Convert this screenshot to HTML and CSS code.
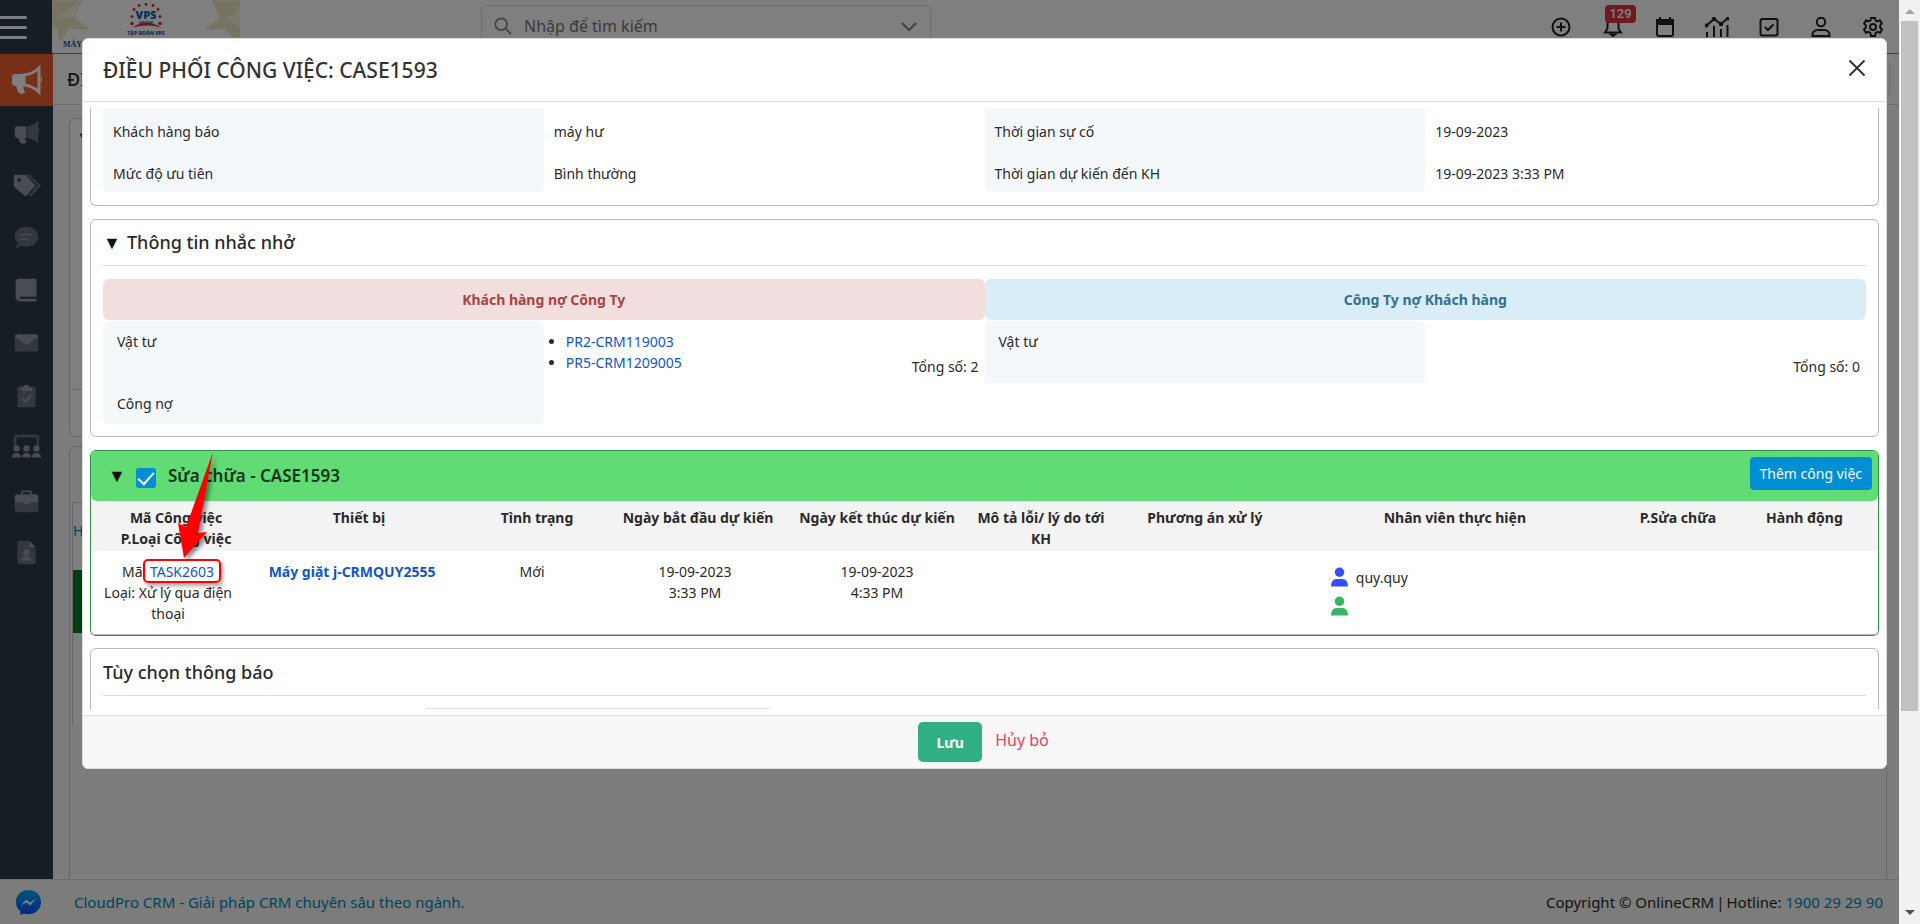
FILE: index.html
```html
<!DOCTYPE html>
<html lang="vi">
<head>
<meta charset="utf-8">
<title>Điều phối công việc</title>
<link rel="stylesheet" href="styles.css">
</head>
<body>
<div class="app">
  <header class="topbar">
    <button class="menu-btn" aria-label="Menu"><span></span><span></span><span></span></button>
    <svg class="logo" viewBox="0 0 188 51" aria-label="VPS Group">
      <g fill="#efe6c4">
        <path d="M0 0h30l-8 17 16 12-21-1-9 14L5 27H0z"/>
        <path d="M188 0h-28l8 17-16 12 21-1 8 9 3 0 4-1z"/>
      </g>
      <path d="M6 17l16 0 6-17-11 8zM172 17l10-3 6-10v22z" fill="#f8f3dd"/>
      <path d="M81 27q13-10 28 0q-14-4-28 0z" fill="#d6303f"/>
      <g fill="#d6303f"><circle cx="80" cy="16" r="1.500"/><circle cx="82" cy="9" r="1.400"/><circle cx="87" cy="5" r="1.400"/><circle cx="94" cy="4" r="1.400"/><circle cx="101" cy="5" r="1.400"/><circle cx="106" cy="9" r="1.400"/><circle cx="108" cy="16" r="1.500"/><circle cx="80" cy="23" r="1.800"/><circle cx="108" cy="23" r="1.800"/></g>
      <text x="94" y="18" text-anchor="middle" class="logo-vps">VPS</text>
      <text x="94" y="23" text-anchor="middle" class="logo-group">GROUP</text>
      <text x="94" y="34" text-anchor="middle" class="logo-sub">TẬP ĐOÀN VPS</text>
      <text x="11" y="46" class="logo-name">MÁY</text>
    </svg>
    <div class="search-wrap">
      <label class="search">
        <svg viewBox="0 0 20 20" class="i18"><circle cx="8" cy="8" r="6.500"/><path d="M13 13l6 6"/></svg>
        <input type="text" placeholder="Nhập để tìm kiếm" aria-label="Nhập để tìm kiếm">
        <svg viewBox="0 0 18 18" class="i18"><path d="M2 6l7 7 7-7"/></svg>
      </label>
    </div>
    <div class="tools">
      <button aria-label="Thêm"><svg viewBox="0 0 20 20"><circle cx="10" cy="10" r="8.500"/><path d="M10 5.500v9M5.500 10h9"/></svg></button>
      <button aria-label="Thông báo"><svg viewBox="0 0 20 20"><path d="M2 15.500h16l-2.500-4V7a5.500 5.500 0 0 0-11 0v4.500z"/><path d="M8 17.500h4l-2 1.500z" fill="#222"/></svg><span class="badge">129</span></button>
      <button aria-label="Lịch"><svg viewBox="0 0 20 20"><rect x="2" y="3" width="16" height="16" rx="2"/><path d="M2 3h16v4H2zM5 0v3M15 0v3" fill="#222"/></svg></button>
      <button aria-label="Báo cáo"><svg viewBox="0 0 24 20" class="wide"><path d="M2 20v-5M9 20V9M16 20v-8M22.500 20V8M1 9l8-7 7 5 7-6"/><g fill="#222"><circle cx="1.500" cy="8.500" r="1"/><circle cx="9" cy="2" r="1.200"/><circle cx="16" cy="7" r="1.200"/><circle cx="23" cy="1.500" r="1"/></g></svg></button>
      <button aria-label="Việc cần làm"><svg viewBox="0 0 20 20"><rect x="1.500" y="2" width="17" height="16.500" rx="2"/><path d="M6 10l3 3 5.500-5.500"/></svg></button>
      <button aria-label="Tài khoản"><svg viewBox="0 0 20 20"><circle cx="10" cy="5" r="4.200"/><path d="M1.500 19v-1.500a5 5 0 0 1 5-4.500h7a5 5 0 0 1 5 4.500V19z"/></svg></button>
      <button aria-label="Cài đặt"><svg viewBox="0 0 20 20"><path d="M8 1h4l.6 2.600 1.700.9 2.500-1.200 2 3-1.600 2v2.200l1.800 2-1.800 3.200-2.700-.8-1.800 1L12 19H8l-.7-3.100-1.800-1-2.700.8L1 12.500l1.800-2V8.300L1.200 6.300l2-3 2.500 1.200 1.700-.9z"/><circle cx="10" cy="10" r="3"/></svg></button>
    </div>
  </header>
  <div class="middle">
    <nav class="side">
      <a href="#" class="active" aria-label="Tiếp thị"><svg viewBox="0 0 32 32"><path d="M4 10h9v12h-1l2 7q-5 2-7-1l-2-6q-4 0-4-3v-6q0-3 3-3z"/><path d="M13 11q9-1 15-7v24q-6-6-15-7z" fill="none" stroke="currentColor" stroke-width="3"/><path d="M30 12q2 4 0 7z"/></svg></a>
      <a href="#" aria-label="Chiến dịch"><svg viewBox="0 0 32 32"><path d="M6 9h10v13h-2l2 5q-4 3-7 0l-2-5H6q-3 0-3-3v-7q0-3 3-3z"/><path class="dim" d="M17 9q7-1 12-6v8q3 3 0 6v11q-5-5-12-6z"/></svg></a>
      <a href="#" aria-label="Nhãn"><svg viewBox="0 0 32 32"><path class="dim" d="M18 3l14 13-11 12-3-1 10-11L16 4z"/><path d="M3 4h12l11 12-11 12L2 17V5z"/><circle cx="8" cy="10" r="2" fill="#2c3b49"/></svg></a>
      <a href="#" aria-label="Tin nhắn"><svg viewBox="0 0 32 32"><path class="dim" d="M16 4c8 0 13 5 13 11S24 26 16 26q-3 0-5-1l-8 3 4-6q-4-3-4-7C3 9 8 4 16 4z"/><path d="M9 12h14v1.500H9zM9 17h9v1.500H9z"/></svg></a>
      <a href="#" aria-label="Sổ tay"><svg viewBox="0 0 32 32"><path d="M8 3h19v20H9q-2 1 0 2h18v3H8q-4-1-4-5V7q0-4 4-4z"/></svg></a>
      <a href="#" aria-label="Thư"><svg viewBox="0 0 32 32"><path class="dim" d="M3 10l13 9 13-9v14q0 2-2 2H5q-2 0-2-2z"/><path d="M5 7h22q2 0 2 3l-13 9L3 10q0-3 2-3z"/></svg></a>
      <a href="#" aria-label="Nhiệm vụ"><svg viewBox="0 0 32 32"><path class="dim" d="M8 6h16q2 0 2 2v19q0 2-2 2H8q-2 0-2-2V8q0-2 2-2z"/><path d="M10 11V7h3a3 3 0 0 1 6 0h3v4z"/><path d="M11 19l4 4 6-8" fill="none" stroke="currentColor" stroke-width="2.500"/></svg></a>
      <a href="#" aria-label="Nhóm"><svg viewBox="0 0 32 32"><path class="dim" d="M2 14V5q0-3 3-3h22q3 0 3 3v9h-3V5H5v9z"/><circle cx="5" cy="17" r="3.500"/><circle cx="16" cy="17" r="3.500"/><circle cx="27" cy="17" r="3.500"/><path d="M0 27q0-5 5-5t5 5zM11 27q0-5 5-5t5 5zM22 27q0-5 5-5t5 5z"/></svg></a>
      <a href="#" aria-label="Công việc"><svg viewBox="0 0 32 32"><path class="dim" d="M3 17h26v9q0 3-3 3H6q-3 0-3-3z"/><path d="M10 9V7q0-2 2-2h8q2 0 2 2v2h4q3 0 3 3v6H19v2h-6v-2H3v-6q0-3 3-3zM12 9h8V7h-8z" fill-rule="evenodd"/></svg></a>
      <a href="#" aria-label="Hồ sơ"><svg viewBox="0 0 32 32"><path class="dim" d="M8 3h11v7h7v17q0 2-2 2H8q-2 0-2-2V5q0-2 2-2z"/><path d="M19 3l7 7h-7z"/><circle cx="16" cy="16" r="3.500"/><path d="M10 25q0-5 6-5t6 5z"/></svg></a>
    </nav>
    <main class="page">
      <div class="crumbs"><span>ĐI</span><div class="crumb-box"></div></div>
      <div class="canvas">
        <div class="bg-card first"><span>▼</span></div>
        <div class="bg-card second"><div class="bg-inner"><a href="#">H</a><div class="bg-green"></div><div class="bg-rest"></div></div></div>
      </div>
    </main>
  </div>
  <footer class="foot">
    <svg class="messenger" viewBox="0 0 26 26"><defs><linearGradient id="mg" x1="0" y1="0" x2="0" y2="1"><stop offset="0" stop-color="#00a8ff"/><stop offset="1" stop-color="#0050ff"/></linearGradient></defs><path d="M13 0C5 0 0 5.500 0 12.500c0 4 1.500 7 4.500 9.300V26l4-1.600q2 .7 4.500.7c8 0 13-5.600 13-12.600S21 0 13 0z" fill="url(#mg)"/><path d="M5 16l5.500-6 4 3 6-4-5.500 7-4-3z" fill="#fff"/></svg>
    <a href="#">CloudPro CRM - Giải pháp CRM chuyên sâu theo ngành.</a>
    <p>Copyright © OnlineCRM<span class="bar">|</span>Hotline: <a href="#">1900 29 29 90</a></p>
  </footer>

  <div class="backdrop">
    <section class="modal" role="dialog" aria-labelledby="mt">
      <header class="modal-head">
        <h1 id="mt">ĐIỀU PHỐI CÔNG VIỆC: CASE1593</h1>
        <button class="close" aria-label="Đóng"><svg viewBox="0 0 18 18"><path d="M1.500 1.500l15 15M16.500 1.500l-15 15"/></svg></button>
      </header>
      <div class="modal-body">
        <section class="block cut">
          <dl class="fields">
            <dt>Khách hàng báo</dt><dd>máy hư</dd><dt>Thời gian sự cố</dt><dd>19-09-2023</dd>
            <dt class="end">Mức độ ưu tiên</dt><dd>Bình thường</dd><dt class="end">Thời gian dự kiến đến KH</dt><dd>19-09-2023 3:33 PM</dd>
          </dl>
        </section>

        <section class="block">
          <h2><span class="tri">▼</span>Thông tin nhắc nhở</h2>
          <div class="debts">
            <div class="debt">
              <h3 class="red">Khách hàng nợ Công Ty</h3>
              <div class="debt-grid">
                <div class="lab start">Vật tư</div>
                <div class="items"><ul><li><a href="#">PR2-CRM119003</a></li><li><a href="#">PR5-CRM1209005</a></li></ul><span>Tổng số: 2</span></div>
                <div class="lab low">Công nợ</div>
              </div>
            </div>
            <div class="debt">
              <h3 class="blue">Công Ty nợ Khách hàng</h3>
              <div class="debt-grid">
                <div class="lab start">Vật tư</div>
                <div class="items"><span>Tổng số: 0</span></div>
              </div>
            </div>
          </div>
        </section>

        <section class="block repair">
          <div class="repair-head">
            <span class="tri">▼</span>
            <input type="checkbox" id="fix" checked>
            <label for="fix">Sửa chữa - CASE1593</label>
            <button>Thêm công việc</button>
          </div>
          <table>
            <colgroup><col class="c1"><col class="c2"><col class="c3"><col class="c4"><col class="c5"><col class="c6"><col class="c7"><col class="c8"><col class="c9"><col class="c10"></colgroup>
            <thead><tr><th>Mã Công việc<br>P.Loại Công việc</th><th>Thiết bị</th><th>Tình trạng</th><th>Ngày bắt đầu dự kiến</th><th>Ngày kết thúc dự kiến</th><th>Mô tả lỗi/ lý do tới KH</th><th>Phương án xử lý</th><th>Nhân viên thực hiện</th><th>P.Sửa chữa</th><th>Hành động</th></tr></thead>
            <tbody><tr>
              <td>Mã: <span class="marked"><a href="#">TASK2603</a><svg class="arrow" viewBox="0 0 40 112"><path d="M35 1L20 82l9-1L6 107 0 72l8 4z"/></svg></span><br>Loại: Xử lý qua điện thoại</td>
              <td><a href="#"><b>Máy giặt j-CRMQUY2555</b></a></td>
              <td>Mới</td>
              <td>19-09-2023<br>3:33 PM</td>
              <td>19-09-2023<br>4:33 PM</td>
              <td></td><td></td>
              <td><div class="staff"><svg class="u-blue" viewBox="0 0 18 20"><circle cx="9" cy="5" r="5"/><path d="M0 20q0-8 6-8h6q6 0 6 8z"/></svg>quy.quy</div><div class="staff"><svg class="u-green" viewBox="0 0 18 20"><circle cx="9" cy="5" r="5"/><path d="M0 20q0-8 6-8h6q6 0 6 8z"/></svg></div></td>
              <td></td><td></td>
            </tr></tbody>
          </table>
        </section>

        <section class="block notify">
          <h2>Tùy chọn thông báo</h2>
          <input type="text" aria-label="Tùy chọn thông báo">
        </section>
      </div>
      <footer class="modal-foot"><button class="save">Lưu</button><a href="#">Hủy bỏ</a></footer>
    </section>
  </div>
</div>
<div class="scroll" aria-hidden="true"><i class="up"></i><div class="thumb"></div><i class="down"></i></div>
</body>
</html>
```
FILE: styles.css
```css
* { box-sizing: border-box; }
html, body { height: 100%; margin: 0; }
body { display: flex; overflow: hidden; font: 14px/21px "Noto Sans", "Open Sans", sans-serif; color: #2a2a2a; }
h1, h2, h3, p, ul, dl, dd { margin: 0; padding: 0; }
button { font: inherit; border: 0; background: none; padding: 0; cursor: pointer; }
a { color: #1155cc; text-decoration: none; }
svg { display: block; }

.app { position: relative; flex: 1; min-width: 0; display: flex; flex-direction: column; }

/* Top bar */
.topbar { height: 54px; display: flex; background: #fff; border-bottom: 1px solid #e9592b; }
.menu-btn { width: 52px; height: 54px; background: #2c3b49; display: flex; flex-direction: column; align-items: flex-start; justify-content: center; gap: 7px; }
.menu-btn span { width: 27px; height: 3px; background: #fff; border-radius: 0 2px 2px 0; }
.logo { width: 188px; height: 52px; }
.logo-vps { font: 900 11px "Open Sans", sans-serif; fill: #1467b0; }
.logo-group { font: 700 4px "Open Sans", sans-serif; fill: #1467b0; }
.logo-sub { font: 800 5px "Open Sans", sans-serif; fill: #1467b0; }
.logo-name { font: 700 8px "Liberation Serif", serif; fill: #1d4f8f; }
.search-wrap { flex: 1; padding: 5px 0 0 241px; }
.search { width: 450px; height: 42px; display: flex; align-items: center; gap: 10px; padding: 0 12px; border: 1px solid #ddd; border-radius: 5px; }
.search input { flex: 1; min-width: 0; border: 0; outline: 0; background: none; font: 16px "Noto Sans", sans-serif; }
.search input::placeholder { color: #777; opacity: 1; }
.i18 { width: 18px; height: 18px; fill: none; stroke: #888; stroke-width: 2; }
.tools { display: flex; padding: 17px 14px 0 0; gap: 28px; }
.tools button { position: relative; width: 24px; height: 20px; display: flex; justify-content: center; }
.tools svg { width: 20px; height: 20px; fill: none; stroke: #222; stroke-width: 2; }
.tools .wide { width: 24px; }
.badge { position: absolute; left: 4px; top: -12px; width: 31px; height: 18px; border-radius: 4px; background: #dc3545; color: #fff; font: 500 13px/18px Roboto, sans-serif; }

/* Background page */
.middle { flex: 1; min-height: 0; display: flex; }
.side { width: 53px; background: #2c3b49; color: #9299a0; }
.side a { height: 52px; display: grid; place-items: center; color: inherit; }
.side a:nth-child(even) { height: 53px; }
.side a svg { width: 29px; height: 29px; fill: currentColor; }
.side .dim { fill: #66707b; }
.side .active { background: #f05e2e; color: #fff; }
.side .active svg { width: 32px; height: 32px; }
.page { flex: 1; min-width: 0; display: flex; flex-direction: column; background: #f8f9fc; }
.crumbs { height: 51px; display: flex; align-items: center; justify-content: space-between; padding: 0 9px 0 14px; background: #fff; border-bottom: 1px solid #ddd; font-size: 18px; font-weight: 500; }
.crumb-box { width: 120px; height: 39px; border: 1px solid #ddd; border-radius: 5px; }
.canvas { flex: 1; padding: 13px 12px 0 16px; display: flex; flex-direction: column; gap: 9px; }
.bg-card { border: 1px solid #ccc; border-radius: 6px; }
.bg-card.first { height: 319px; padding: 8px 6px; background: linear-gradient(#ccc, #ccc) 2px 270px / 100% 1px no-repeat #fff; font-size: 18px; }
.bg-card.second { flex: 1; border-bottom: 0; border-radius: 6px 6px 0 0; padding: 55px 0 0 2px; }
.bg-inner { border: 1px solid #ccc; border-width: 1px 0 0 1px; background: #fff; padding-top: 17px; }
.bg-inner a { color: #0088cc; }
.bg-green { height: 63px; margin-top: 29px; background: #077c26; }
.bg-rest { height: 92px; }

.foot { height: 45px; display: flex; align-items: center; padding: 0 16px; border-top: 1px solid #ddd; background: #f8f9f6; font-size: 15px; }
.foot a { color: #0088cc; }
.messenger { width: 25px; height: 27px; margin-right: 33px; }
.foot p { margin-left: auto; }
.bar { margin: 0 2px; }

/* Modal */
.backdrop { position: absolute; inset: 0; padding: 38px 12px 0 82px; background: rgba(0, 0, 0, .5); }
.modal { border: 1px solid #ddd; border-radius: 6px; background: #fff; overflow: hidden; }
.modal-head { height: 63px; display: flex; justify-content: space-between; align-items: center; padding: 0 20px 0 20px; border-bottom: 1px solid #ddd; }
.modal-head h1 { font-size: 21px; line-height: 28px; font-weight: 500; color: #333; }
.close { padding-bottom: 4px; }
.close svg { width: 18px; height: 18px; fill: none; stroke: #333; stroke-width: 2; }
.modal-body { height: calc(100vh - 323px); margin: 6px 7px; display: flex; flex-direction: column; gap: 13px; overflow: hidden; }
.block { flex: none; border: 1px solid #c4b4b6; border-radius: 6px; padding: 0 12px 12px; }
.cut { border-top: 0; border-radius: 0 0 6px 6px; padding-bottom: 13px; }
.block h2 { display: flex; gap: 10px; font-size: 18px; line-height: 24px; font-weight: 500; padding: 10px 0 11px; border-bottom: 1px solid #ddd; }
.tri { width: 14px; font-size: 18px; color: #111; }

.fields { display: grid; grid-template-columns: repeat(4, 1fr); }
.fields dt, .fields dd { padding: 13px 10px 8px; }
.fields dt { background: #f4f8fb; }
.fields dt.end { border-radius: 0 0 6px 6px; }

.debts { display: grid; grid-template-columns: 1fr 1fr; padding-top: 13px; }
.debt h3 { font-size: 14px; line-height: 21px; font-weight: 700; padding: 10px; text-align: center; border-radius: 6px; margin-bottom: 1px; }
.debt .red { background: #f2dede; color: #a94442; }
.debt .blue { background: #d9edf7; color: #31708f; }
.debt-grid { display: grid; grid-template-columns: 1fr 1fr; }
.lab { background: #f4f8fb; padding: 10px 14px; }
.lab.start { border-radius: 6px 6px 0 0; }
.lab.low { border-radius: 0 0 6px 6px; }
.items { display: flex; flex-direction: column; align-items: flex-end; padding: 10px 6px 6px 0; min-height: 62px; }
.items ul { align-self: flex-start; padding-left: 22px; margin-bottom: -17px; }
.items span { margin-top: auto; }

.repair { border-color: #2f944b; padding: 0; margin-bottom: -1px; }
.repair-head { display: flex; align-items: flex-start; height: 50px; padding: 6px 6px 0 17px; background: #61dc74; border-radius: 5px 5px 6px 6px; }
.repair-head .tri { padding-top: 8px; width: 28px; }
.repair-head input { appearance: none; width: 20px; height: 20px; margin: 11px 12px 0 0; border-radius: 3px; background: #008fd5; display: grid; place-items: center; }
.repair-head input:checked::before { content: ""; width: 14px; height: 7px; border: solid #fff; border-width: 0 0 2px 2px; rotate: -48deg; margin-bottom: 4px; }
.repair-head label { padding-top: 7px; font-size: 17px; line-height: 24px; font-weight: 600; color: #17351d; }
.repair-head button { margin-left: auto; height: 33px; padding: 0 10px; border-radius: 4px; background: #008fd5; color: #fff; }
table { width: 100%; table-layout: fixed; border-collapse: collapse; text-align: center; border-bottom: 1px solid #c4b4b6; }
th { background: #f3f3f3; font-weight: 700; padding: 6px 0 2px; vertical-align: top; height: 50px; }
th:first-child { padding-left: 8px; }
th:last-child { padding-right: 10px; }
td { vertical-align: top; padding: 10px 0; }
td:nth-child(1) { padding: 10px 20px 10px 12px; }
td:nth-child(2) { padding-right: 14px; }
td:nth-child(3) { padding-right: 10px; }
td:nth-child(4) { padding-right: 6px; }
.c1 { width: 9.07%; } .c2 { width: 11.86%; } .c3 { width: 8.06%; } .c4 { width: 9.96%; } .c5 { width: 10.07%; }
.c6 { width: 8.28%; } .c7 { width: 10.07%; } .c8 { width: 17.91%; } .c9 { width: 7.05%; } .c10 { width: 7.67%; }
.staff { display: flex; align-items: center; gap: 8px; padding: 3px 0 0 36px; height: 29px; }
.staff svg { width: 17px; height: 20px; }
.u-blue { fill: #334dff; }
.u-green { fill: #35b864; }
.marked { position: relative; }
.marked::after { content: ""; position: absolute; inset: -3px -7px -2px; border: 2px solid #f00; border-radius: 5px; box-shadow: 2px 3px 4px rgba(0, 0, 0, .35); pointer-events: none; }
.arrow { position: absolute; left: 28px; bottom: 18px; width: 40px; height: 112px; fill: #f00; filter: drop-shadow(3px 3px 2px rgba(0, 0, 0, .45)); }

.notify h2 { padding: 11px 0 11px; }
.notify input { display: block; width: 346px; height: 36px; margin: 12px 0 0 322px; border: 1px solid #ddd; border-radius: 2px; }

.modal-foot { display: flex; justify-content: center; gap: 13px; padding: 6px 2px 6px 0; border-top: 1px solid #ddd; background: #f7f7f7; }
.save { height: 40px; width: 64px; border-radius: 5px; background: #31b085; color: #fff; font-weight: 700; }
.modal-foot a { color: #e8415f; font-size: 16px; line-height: 36px; }

/* Window scroll bar */
.scroll { width: 21px; flex: none; display: flex; flex-direction: column; align-items: center; background: #f1f1f1; }
.thumb { width: 17px; flex: 690 0 0; background: #c1c1c1; }
.scroll i { width: 0; height: 0; border: 5px solid transparent; }
.scroll .up { border-bottom-color: #a3a3a3; border-top: 0; margin: 9px 0 7px; }
.scroll .down { border-top-color: #505050; border-bottom: 0; margin: 199px 0 9px; }
```
